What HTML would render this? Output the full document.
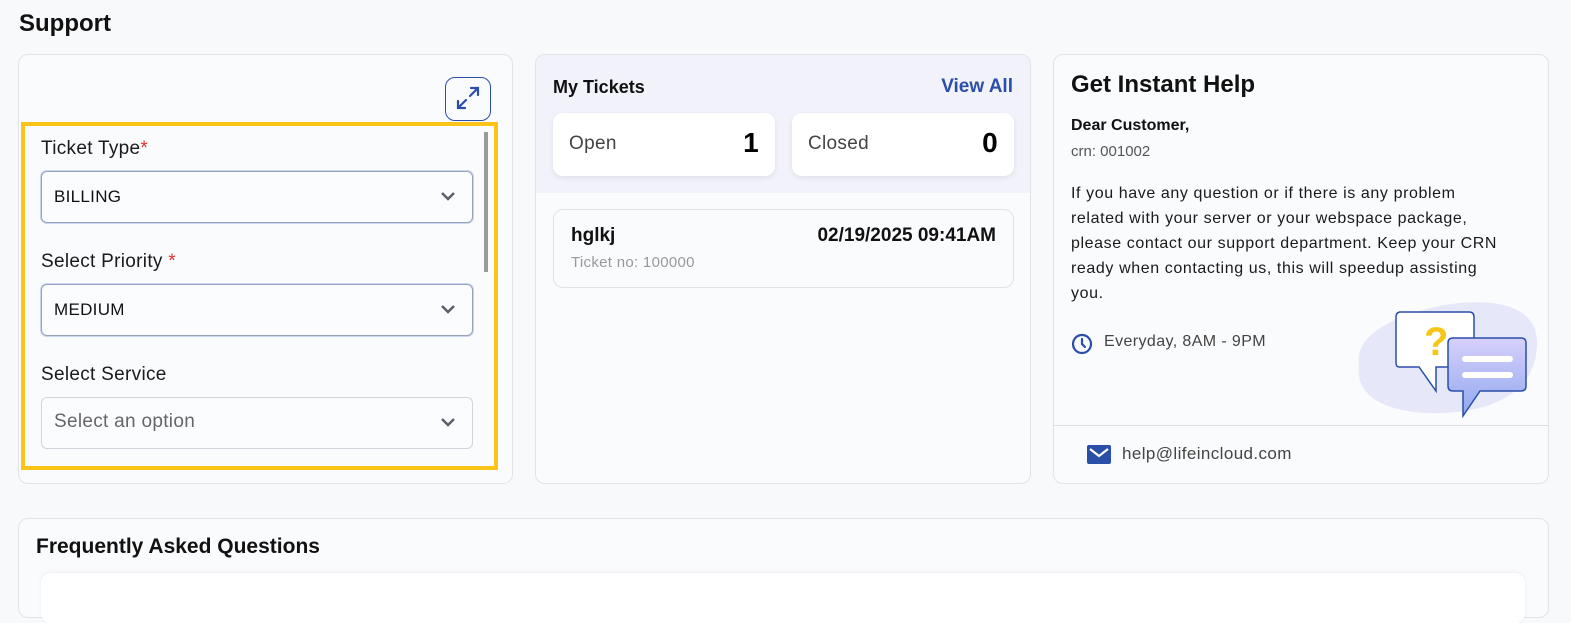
<!DOCTYPE html>
<html><head><meta charset="utf-8"><style>
*{box-sizing:border-box;margin:0;padding:0}
body{width:1571px;height:585px;overflow:hidden;background:#f8f9fb;font-family:"Liberation Sans",sans-serif;color:#111;position:relative}
.abs{position:absolute}
.card{position:absolute;background:#fafbfd;border:1px solid #e1e3e8;border-radius:10px}
h1{position:absolute;left:19px;top:10px;font-size:24px;font-weight:bold}
.lbl{position:absolute;left:18px;font-size:19px;color:#1a1a1a;letter-spacing:.3px}
.sel{position:absolute;left:18px;width:432px;height:52px;border:1px solid #9aa3b5;border-radius:6px;background:#fbfcfe;box-shadow:0 0 0 1px #c9d6f2;font-size:17px;padding:15px 12px;letter-spacing:.3px}
.sel svg{position:absolute;right:16px;top:19px}
.stat{position:absolute;top:58px;width:222px;height:63px;background:#fff;border-radius:10px;box-shadow:0 2px 6px rgba(0,0,0,.08);font-size:19px;color:#444;padding:20px 16px;letter-spacing:.3px}
.stat b{position:absolute;right:16px;top:14px;font-size:28px;color:#000}
</style></head><body>
<h1>Support</h1>

<div class="card" style="left:18px;top:54px;width:495px;height:430px">
  <div class="abs" style="left:426px;top:22px;width:46px;height:44px;border:1.5px solid #2a4fa8;border-radius:10px">
    <svg width="46" height="44" viewBox="0 0 46 44" style="position:absolute;left:-1px;top:-1px"><g stroke="#2a4fa8" stroke-width="2.2" fill="none" stroke-linecap="round"><path d="M13 31 L21 23 M25 19 L33 11 M26 11 H33 V18 M13 24 V31 H20"/></g></svg>
  </div>
  <div class="abs" style="left:2px;top:67px;width:477px;height:348px;border:4px solid #fcc419"></div>
  <div class="abs" style="left:465px;top:77px;width:4px;height:140px;background:#9a9a9a"></div>
  <div class="lbl" style="left:22px;top:83px">Ticket Type<span style="color:#e03131">*</span></div>
  <div class="sel" style="left:22px;top:116px">BILLING<svg width="16" height="10"><path d="M2 2 L8 8 L14 2" stroke="#5b5f6a" stroke-width="2.5" fill="none"/></svg></div>
  <div class="lbl" style="left:22px;top:196px">Select Priority <span style="color:#e03131">*</span></div>
  <div class="sel" style="left:22px;top:229px">MEDIUM<svg width="16" height="10"><path d="M2 2 L8 8 L14 2" stroke="#5b5f6a" stroke-width="2.5" fill="none"/></svg></div>
  <div class="lbl" style="left:22px;top:309px">Select Service</div>
  <div class="sel" style="left:22px;top:342px;border-color:#d0d4dc;box-shadow:none;color:#666;font-size:19px;padding:13px 12px">Select an option<svg width="16" height="10"><path d="M2 2 L8 8 L14 2" stroke="#5b5f6a" stroke-width="2.5" fill="none"/></svg></div>
</div>

<div class="card" style="left:535px;top:54px;width:496px;height:430px;overflow:hidden">
  <div class="abs" style="left:0;top:0;width:496px;height:138px;background:#f2f2fb"></div>
  <div class="abs" style="left:17px;top:22px;font-size:18px;font-weight:bold">My Tickets</div>
  <div class="abs" style="right:17px;top:21px;font-size:19px;font-weight:bold;color:#2a4fa8">View All</div>
  <div class="stat" style="left:17px">Open<b>1</b></div>
  <div class="stat" style="left:256px">Closed<b>0</b></div>
  <div class="abs" style="left:17px;top:154px;width:461px;height:79px;border:1px solid #e1e3e8;border-radius:10px;background:#fafbfd">
    <div class="abs" style="left:17px;top:15px;font-size:19px;font-weight:bold">hglkj</div>
    <div class="abs" style="left:17px;top:44px;font-size:15px;color:#999;letter-spacing:.3px">Ticket no: 100000</div>
    <div class="abs" style="right:17px;top:15px;font-size:19px;font-weight:bold">02/19/2025 09:41AM</div>
  </div>
</div>

<div class="card" style="left:1053px;top:54px;width:496px;height:430px;overflow:hidden">
  <div class="abs" style="left:17px;top:16px;font-size:24px;font-weight:bold">Get Instant Help</div>
  <div class="abs" style="left:17px;top:62px;font-size:16px;font-weight:bold">Dear Customer,</div>
  <div class="abs" style="left:17px;top:88px;font-size:15px;color:#555">crn: 001002</div>
  <div class="abs" style="left:17px;top:126px;width:480px;font-size:16px;line-height:25px;color:#1a1a1a;letter-spacing:.6px;white-space:nowrap">If you have any question or if there is any problem<br>related with your server or your webspace package,<br>please contact our support department. Keep your CRN<br>ready when contacting us, this will speedup assisting<br>you.</div>
  <svg class="abs" style="left:17px;top:278px" width="22" height="22" viewBox="0 0 22 22"><circle cx="11" cy="11" r="9" stroke="#2a4fa8" stroke-width="2.2" fill="none"/><path d="M11 6 V11 L14 14" stroke="#2a4fa8" stroke-width="2.2" fill="none" stroke-linecap="round"/></svg>
  <div class="abs" style="left:50px;top:278px;font-size:16px;color:#444;letter-spacing:.4px">Everyday, 8AM - 9PM</div>
  <svg class="abs" style="left:290px;top:240px" width="200" height="130" viewBox="1340 290 200 130">
    <path d="M1355 360 C1350 330 1390 310 1440 300 C1490 292 1535 300 1533 340 C1532 380 1500 405 1440 408 C1390 410 1350 395 1355 360Z" fill="#e6e8fa"/>
    <path d="M1395 307 H1465 Q1470 307 1470 312 V357 Q1470 362 1465 362 H1432 L1432 386 L1415 362 H1395 Q1392 362 1392 357 V312 Q1392 307 1397 307Z" fill="#fff" stroke="#2a4fa8" stroke-width="1.5"/>
    <text x="1420" y="350" font-size="40" font-weight="bold" fill="#f5c518" font-family="Liberation Sans">?</text>
    <defs><linearGradient id="g" x1="0" y1="0" x2="0" y2="1"><stop offset="0" stop-color="#d8d0fa"/><stop offset="1" stop-color="#8fa8f0"/></linearGradient></defs>
    <path d="M1449 333 H1517 Q1522 333 1522 338 V381 Q1522 386 1517 386 H1476 L1459 411 L1459 386 H1449 Q1444 386 1444 381 V338 Q1444 333 1449 333Z" fill="url(#g)" stroke="#2a4fa8" stroke-width="1.5"/>
    <rect x="1458" y="351" width="51" height="6" rx="3" fill="#fff"/><rect x="1458" y="367" width="51" height="6" rx="3" fill="#fff"/>
  </svg>
  <div class="abs" style="left:0;top:370px;width:496px;height:1px;background:#dcdee3"></div>
  <svg class="abs" style="left:33px;top:390px" width="24" height="19" viewBox="0 0 24 19"><rect width="24" height="19" rx="2" fill="#2a4fa8"/><path d="M3 4 L12 11 L21 4" stroke="#fff" stroke-width="2.2" fill="none"/></svg>
  <div class="abs" style="left:68px;top:389px;font-size:17px;color:#444;letter-spacing:.4px">help@lifeincloud.com</div>
</div>

<div class="card" style="left:18px;top:518px;width:1531px;height:100px">
  <div class="abs" style="left:17px;top:16px;font-size:21px;font-weight:bold">Frequently Asked Questions</div>
  <div class="abs" style="left:22px;top:54px;width:1484px;height:50px;background:#fff;border-radius:10px;box-shadow:0 -1px 4px rgba(0,0,0,.06)"></div>
</div>
</body></html>
